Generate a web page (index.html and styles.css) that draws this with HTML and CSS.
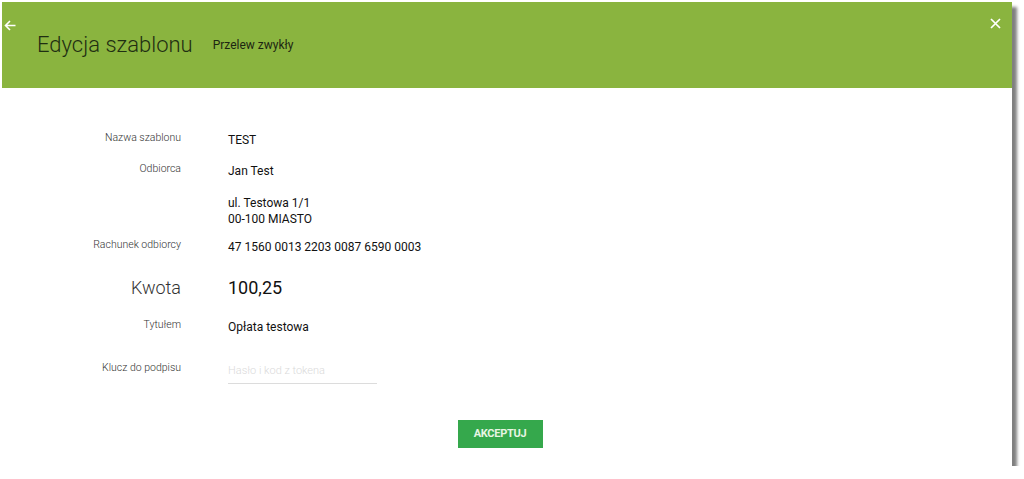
FILE: index.html
```html
<!DOCTYPE html>
<html lang="pl">
    <head>
        <title>Edycja szablonu</title>
        <link rel="stylesheet" href="styles.css">
    </head>
    <body>
        <div class="panel">
            <div class="header">
                <span class="back">
                    <svg width="12" height="11" viewBox="0 0 12 11"><path d="M11.5 5.5H1.5M6 1L1.5 5.5L6 10" fill="none" stroke="#fff" stroke-width="1.6"/></svg>
                </span>
                <h1 class="title">Edycja szablonu</h1>
                <span class="subtitle">Przelew zwykły</span>
                <span class="close">
                    <svg width="11" height="11" viewBox="0 0 11 11"><path d="M1 1L10 10M10 1L1 10" fill="none" stroke="#fff" stroke-width="1.7"/></svg>
                </span>
            </div>
            <div class="content">
                <div class="row row-first">
                    <div class="label">Nazwa szablonu</div>
                    <div class="value">TEST</div>
                </div>
                <div class="row row-name">
                    <div class="label">Odbiorca</div>
                    <div class="value">Jan Test</div>
                </div>
                <div class="row row-address">
                    <div class="label"></div>
                    <div class="value">ul. Testowa 1/1<br>00-100 MIASTO</div>
                </div>
                <div class="row row-account">
                    <div class="label">Rachunek odbiorcy</div>
                    <div class="value">47 1560 0013 2203 0087 6590 0003</div>
                </div>
                <div class="row row-amount">
                    <div class="label">Kwota</div>
                    <div class="value">100,25</div>
                </div>
                <div class="row row-title">
                    <div class="label">Tytułem</div>
                    <div class="value">Opłata testowa</div>
                </div>
                <div class="row row-key">
                    <div class="label">Klucz do podpisu</div>
                    <div class="value"><input type="password" class="key-input" placeholder="Hasło i kod z tokena"></div>
                </div>
                <div class="actions">
                    <button type="button" class="accept">AKCEPTUJ</button>
                </div>
            </div>
        </div>
    </body>
</html>
```

FILE: styles.css
```css
body {
    margin: 0;
    background: #fff;
    font-family: Roboto, "Liberation Sans", sans-serif;
}
.panel {
    margin: 2px 0 0 2px;
    width: 1010px;
    height: 464px;
    background: #fff;
    box-shadow: 5px 5px 3px #808080;
}
.header {
    position: relative;
    height: 86px;
    background: #8ab43f;
    display: flex;
    align-items: center;
    padding-left: 35px;
}
.back {
    position: absolute;
    left: 2px;
    top: 14px;
}
.close {
    position: absolute;
    right: 11px;
    top: 12px;
}
.title {
    margin: 0;
    font-size: 22px;
    font-weight: 300;
    color: #1f2e12;
    margin-top: -2px;
}
.subtitle {
    margin-left: 20px;
    font-size: 12px;
    font-weight: 400;
    color: #1d2612;
}
.content {
    padding-top: 40px;
}
.row {
    display: grid;
    grid-template-columns: 179px 1fr;
    column-gap: 47px;
    line-height: 24px;
}
.label {
    text-align: right;
    font-size: 10.5px;
    font-weight: 300;
    color: #333;
    line-height: 20px;
}
.value {
    font-size: 12px;
    font-weight: 400;
    color: #111;
}
.row-name {
    margin-top: 7px;
}
.row-address {
    margin-top: 12px;
    line-height: 16px;
}
.row-account {
    margin-top: 8px;
}
.row-amount {
    margin-top: 14px;
    line-height: 30px;
}
.row-amount .label {
    font-size: 18px;
    line-height: 30px;
}
.row-amount .value {
    font-size: 18px;
}
.row-title {
    margin-top: 12px;
}
.row-key {
    margin-top: 19px;
}
.key-input {
    width: 149px;
    height: 24px;
    padding: 0;
    border: 0;
    border-bottom: 1px solid #dcdcdc;
    font-family: Roboto, "Liberation Sans", sans-serif;
    font-size: 11px;
    outline: none;
}
.key-input::placeholder {
    color: #dadada;
    font-weight: 300;
}
.actions {
    margin-top: 36px;
    padding-right: 14px;
    display: flex;
    justify-content: center;
}
.accept {
    width: 85px;
    height: 28px;
    border: 0;
    background: #35a84c;
    color: #e8f5e3;
    font-family: Roboto, "Liberation Sans", sans-serif;
    font-size: 11px;
    font-weight: 700;
    letter-spacing: -0.3px;
}
```
